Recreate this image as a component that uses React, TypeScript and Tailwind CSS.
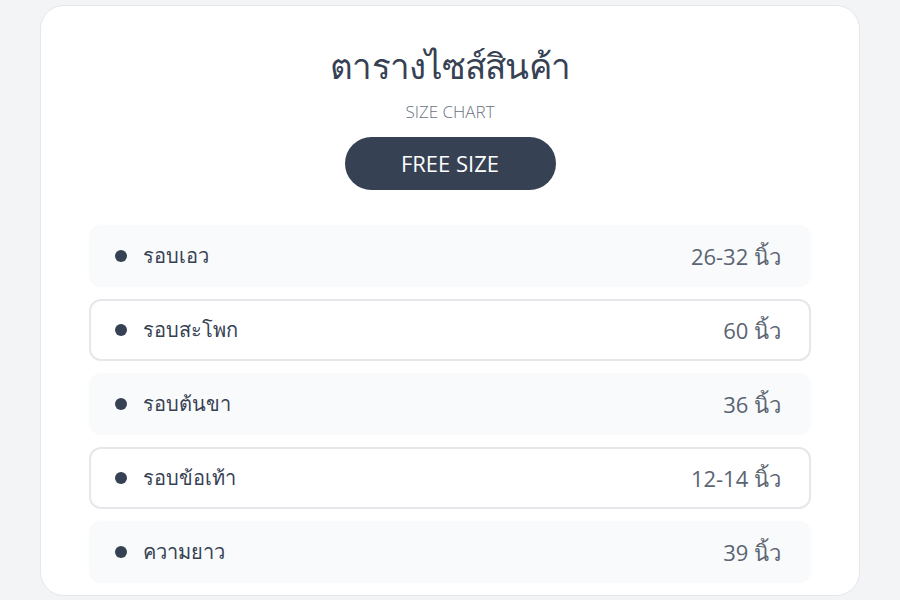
import React from "react";

const rows = [
  { label: "รอบเอว", value: "26-32 นิ้ว" },
  { label: "รอบสะโพก", value: "60 นิ้ว" },
  { label: "รอบต้นขา", value: "36 นิ้ว" },
  { label: "รอบข้อเท้า", value: "12-14 นิ้ว" },
  { label: "ความยาว", value: "39 นิ้ว" },
];

export default function App() {
  return (
    <div
      className="min-h-screen bg-gray-100 flex items-center justify-center"
      style={{ fontFamily: "'Open Sans', sans-serif" }}
    >
      <div className="w-[820px] bg-white border border-gray-200 rounded-3xl px-12 pt-10 pb-3 mt-[1px]">
        <h1 className="text-center text-[35px] leading-10 font-medium tracking-tight text-gray-700">ตารางไซส์สินค้า</h1>
        <p className="text-center text-[17px] font-light text-gray-500 mt-[13px]">SIZE CHART</p>
        <div className="flex justify-center mt-[13px]">
          <div className="w-[211px] h-[53px] rounded-full bg-gray-700 text-white text-[22px] flex items-center justify-center">
            FREE SIZE
          </div>
        </div>
        <div className="mt-[35px] flex flex-col gap-3">
          {rows.map((r, i) => (
            <div
              key={r.label}
              className={
                "h-[62px] rounded-xl border-2 flex items-center justify-between pl-6 pr-7 " +
                (i % 2 === 0 ? "bg-gray-50 border-gray-50" : "bg-white border-gray-200")
              }
            >
              <div className="flex items-center gap-4">
                <span className="w-3 h-3 rounded-full bg-gray-700" />
                <span className="text-xl font-medium text-gray-700">{r.label}</span>
              </div>
              <span className="text-[22px] text-[#5b6472]">{r.value}</span>
            </div>
          ))}
        </div>
      </div>
    </div>
  );
}
